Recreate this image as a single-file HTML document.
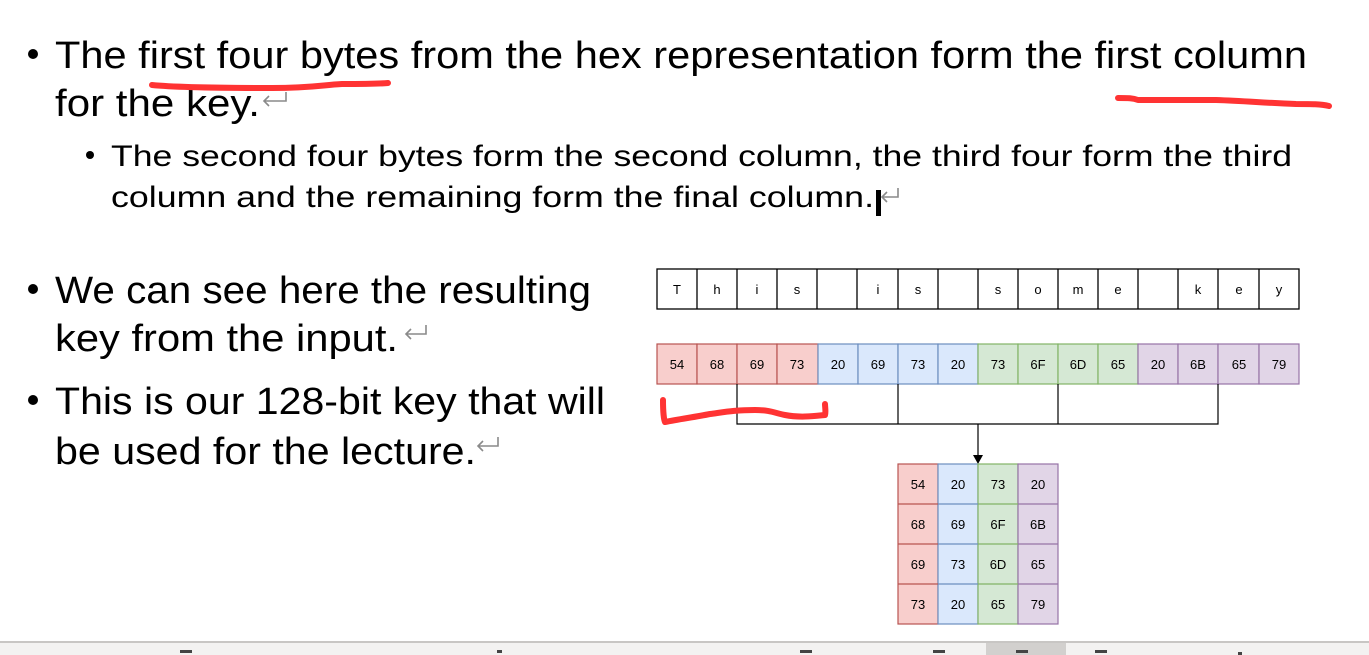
<!DOCTYPE html>
<html><head><meta charset="utf-8"><style>
html,body{margin:0;padding:0;background:#fff;width:1369px;height:655px;overflow:hidden}
svg{display:block}
</style></head><body>
<svg width="1369" height="655" xmlns="http://www.w3.org/2000/svg" font-family="Liberation Sans, sans-serif">
<rect width="1369" height="655" fill="#fff"/>
<g fill="#000" font-size="38">
<circle cx="33" cy="54" r="5"/>
<text x="55" y="68" textLength="1252" lengthAdjust="spacingAndGlyphs">The first four bytes from the hex representation form the first column</text>
<text x="55" y="116" textLength="205" lengthAdjust="spacingAndGlyphs">for the key.</text>
<circle cx="33" cy="289" r="5"/>
<text x="55" y="303" textLength="536" lengthAdjust="spacingAndGlyphs">We can see here the resulting</text>
<text x="55" y="351" textLength="343" lengthAdjust="spacingAndGlyphs">key from the input.</text>
<circle cx="33" cy="400" r="5"/>
<text x="55" y="414" textLength="550" lengthAdjust="spacingAndGlyphs">This is our 128-bit key that will</text>
<text x="55" y="464" textLength="421" lengthAdjust="spacingAndGlyphs">be used for the lecture.</text>
</g>
<g fill="#000" font-size="30">
<circle cx="90" cy="155" r="4"/>
<text x="111" y="166" textLength="1181" lengthAdjust="spacingAndGlyphs">The second four bytes form the second column, the third four form the third</text>
<text x="111" y="207" textLength="763" lengthAdjust="spacingAndGlyphs">column and the remaining form the final column.</text>
</g>
<rect x="876" y="190" width="5" height="26" fill="#000"/>
<g fill="none" stroke="#8a8a8a" stroke-width="1.6">
<path d="M286 92v9h-22M269 96l-5 5 5 5"/>
<path d="M898 188v9h-16M887 192l-5 5 5 5"/>
<path d="M426 325v9h-20M411 329l-5 5 5 5"/>
<path d="M498 437v9h-20M483 441l-5 5 5 5"/>
</g>
<g font-size="13" text-anchor="middle" fill="#000">
<g stroke="#000" stroke-width="1.3" fill="#fff">
<rect x="657" y="269" width="642" height="40"/>
</g>
<g stroke="#000" stroke-width="1.3">
<path d="M697 269v40M737 269v40M777 269v40M817 269v40M857 269v40M898 269v40M938 269v40M978 269v40M1018 269v40M1058 269v40M1098 269v40M1138 269v40M1178 269v40M1218 269v40M1259 269v40"/>
</g>
<text x="677" y="294">T</text><text x="717" y="294">h</text><text x="757" y="294">i</text><text x="797" y="294">s</text>
<text x="878" y="294">i</text><text x="918" y="294">s</text>
<text x="998" y="294">s</text><text x="1038" y="294">o</text><text x="1078" y="294">m</text><text x="1118" y="294">e</text>
<text x="1198" y="294">k</text><text x="1239" y="294">e</text><text x="1279" y="294">y</text>
<g stroke-width="1.2">
<rect x="657" y="344" width="40" height="40" fill="#f8cecc" stroke="#b85450"/>
<rect x="697" y="344" width="40" height="40" fill="#f8cecc" stroke="#b85450"/>
<rect x="737" y="344" width="40" height="40" fill="#f8cecc" stroke="#b85450"/>
<rect x="777" y="344" width="41" height="40" fill="#f8cecc" stroke="#b85450"/>
<rect x="818" y="344" width="40" height="40" fill="#dae8fc" stroke="#6c8ebf"/>
<rect x="858" y="344" width="40" height="40" fill="#dae8fc" stroke="#6c8ebf"/>
<rect x="898" y="344" width="40" height="40" fill="#dae8fc" stroke="#6c8ebf"/>
<rect x="938" y="344" width="40" height="40" fill="#dae8fc" stroke="#6c8ebf"/>
<rect x="978" y="344" width="40" height="40" fill="#d5e8d4" stroke="#82b366"/>
<rect x="1018" y="344" width="40" height="40" fill="#d5e8d4" stroke="#82b366"/>
<rect x="1058" y="344" width="40" height="40" fill="#d5e8d4" stroke="#82b366"/>
<rect x="1098" y="344" width="40" height="40" fill="#d5e8d4" stroke="#82b366"/>
<rect x="1138" y="344" width="40" height="40" fill="#e1d5e7" stroke="#9673a6"/>
<rect x="1178" y="344" width="40" height="40" fill="#e1d5e7" stroke="#9673a6"/>
<rect x="1218" y="344" width="41" height="40" fill="#e1d5e7" stroke="#9673a6"/>
<rect x="1259" y="344" width="40" height="40" fill="#e1d5e7" stroke="#9673a6"/>
</g>
<text x="677" y="369">54</text><text x="717" y="369">68</text><text x="757" y="369">69</text><text x="797" y="369">73</text>
<text x="838" y="369">20</text><text x="878" y="369">69</text><text x="918" y="369">73</text><text x="958" y="369">20</text>
<text x="998" y="369">73</text><text x="1038" y="369">6F</text><text x="1078" y="369">6D</text><text x="1118" y="369">65</text>
<text x="1158" y="369">20</text><text x="1198" y="369">6B</text><text x="1239" y="369">65</text><text x="1279" y="369">79</text>
<g stroke="#000" stroke-width="1.2" fill="none">
<path d="M737 384v40h481v-40M898 384v40M1058 384v40M978 424v32"/>
</g>
<path d="M973 455h10l-5 9z" fill="#000"/>
<g stroke-width="1.2">
<rect x="898" y="464" width="40" height="160" fill="#f8cecc" stroke="#b85450"/>
<rect x="938" y="464" width="40" height="160" fill="#dae8fc" stroke="#6c8ebf"/>
<rect x="978" y="464" width="40" height="160" fill="#d5e8d4" stroke="#82b366"/>
<rect x="1018" y="464" width="40" height="160" fill="#e1d5e7" stroke="#9673a6"/>
<path d="M898 504h40M898 544h40M898 584h40" stroke="#b85450"/>
<path d="M938 504h40M938 544h40M938 584h40" stroke="#6c8ebf"/>
<path d="M978 504h40M978 544h40M978 584h40" stroke="#82b366"/>
<path d="M1018 504h40M1018 544h40M1018 584h40" stroke="#9673a6"/>
</g>
<text x="918" y="489">54</text><text x="958" y="489">20</text><text x="998" y="489">73</text><text x="1038" y="489">20</text>
<text x="918" y="529">68</text><text x="958" y="529">69</text><text x="998" y="529">6F</text><text x="1038" y="529">6B</text>
<text x="918" y="569">69</text><text x="958" y="569">73</text><text x="998" y="569">6D</text><text x="1038" y="569">65</text>
<text x="918" y="609">73</text><text x="958" y="609">20</text><text x="998" y="609">65</text><text x="1038" y="609">79</text>
</g>
<g fill="none" stroke="#ff3333" stroke-width="6" stroke-linecap="round" stroke-linejoin="round">
<path d="M152 85c20 2 60 3 120 3c40 0 50-3 70-4c20 0 35 0 46-1"/>
<path d="M1118 98c10 0 15 0 20 2c40 0 60 0 78 0c30 1 50 3 80 4c15 0 25 0 33 2"/>
<path d="M663 400c0 12 1 20 2 22c15-3 30-5 45-8c15-2 25-4 45-4c15 0 20 3 30 5c15 3 30 1 40 0c1-3 0-8 0-11"/>
</g>
<rect x="0" y="642" width="1369" height="13" fill="#f3f2f1"/>
<rect x="0" y="641" width="1369" height="2" fill="#c8c6c4"/>
<rect x="986" y="643" width="80" height="12" fill="#d2d0ce"/>
<g fill="#444">
<rect x="180" y="650" width="12" height="3"/>
<rect x="497" y="650" width="5" height="3"/>
<rect x="800" y="650" width="12" height="3"/>
<rect x="933" y="650" width="12" height="3"/>
<rect x="1016" y="650" width="12" height="3"/>
<rect x="1095" y="650" width="12" height="3"/>
<rect x="1238" y="652" width="4" height="3"/>
</g>
</svg>
</body></html>
